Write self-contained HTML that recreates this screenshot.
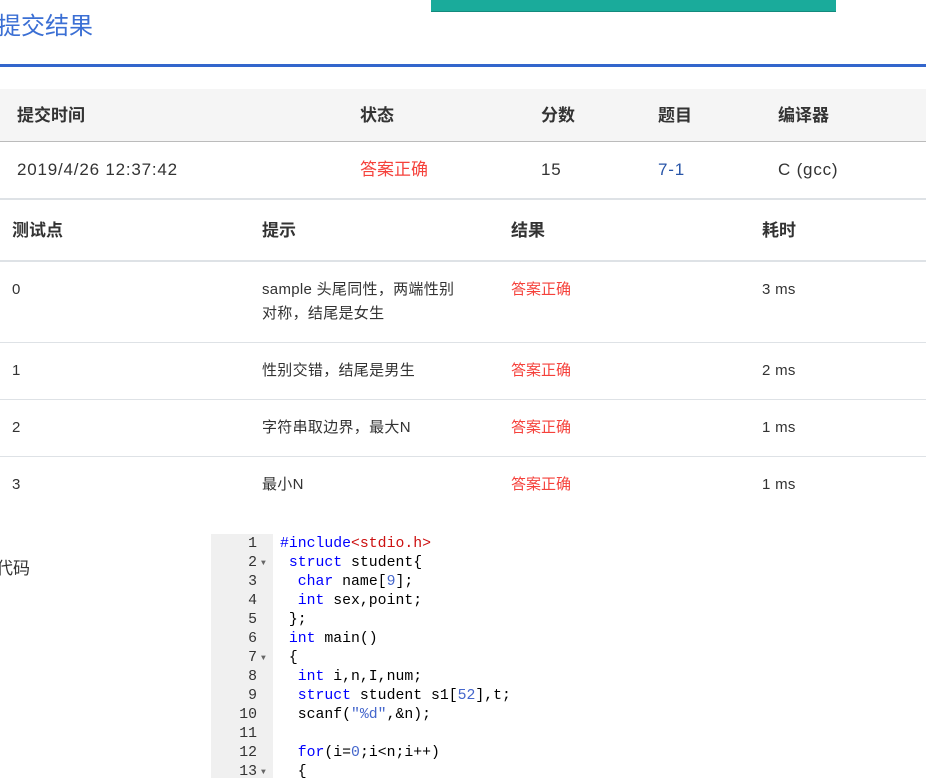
<!DOCTYPE html>
<html><head><meta charset="utf-8">
<style>
*{margin:0;padding:0;box-sizing:border-box}
body{width:926px;height:778px;overflow:hidden;background:#fff;font-family:"Liberation Sans","Noto Sans CJK SC",sans-serif;color:#333;position:relative}
.a{position:absolute;white-space:nowrap;line-height:20px}
.b{font-weight:bold;font-size:17px;color:#333}
.t{font-size:17px;color:#333;letter-spacing:0.8px}
.s{font-size:15px;color:#333;letter-spacing:0.3px}
.r{color:#f5413b;letter-spacing:0}
.code{position:absolute;left:211px;top:534px;width:715px;height:244px;font-family:"Liberation Mono","DejaVu Sans Mono",monospace;font-size:14.8px;line-height:19px}
.gut{position:absolute;left:0;top:0;width:62px;height:244px;background:#f0f0f0}
.ln{position:absolute;left:0;width:46px;text-align:right;color:#333}
.ar{position:absolute;left:50px;font-size:8px;color:#666}
.cl{position:absolute;left:69px;color:#000;white-space:pre}
.k{color:#0000ff}.n{color:#4466cc}.inc{color:#cc1111}
</style></head><body>
<div class="a" style="left:431px;top:0;width:405px;height:12px;background:#1aab9b;border-bottom:1px solid #138a7d"></div>
<div class="a" style="left:-3px;top:12px;font-size:24px;line-height:30px;color:#3b6fd4">提交结果</div>
<div class="a" style="left:0;top:64px;width:926px;height:3px;background:#3366cc"></div>

<div class="a" style="left:0;top:89px;width:926px;height:53px;background:#f5f5f5;border-bottom:1px solid #bbb"></div>
<div class="a b" style="left:17px;top:106px">提交时间</div>
<div class="a b" style="left:360px;top:106px">状态</div>
<div class="a b" style="left:541px;top:106px">分数</div>
<div class="a b" style="left:658px;top:106px">题目</div>
<div class="a b" style="left:778px;top:106px">编译器</div>
<div class="a t" style="left:17px;top:160px">2019/4/26 12:37:42</div>
<div class="a t r" style="left:360px;top:160px">答案正确</div>
<div class="a t" style="left:541px;top:160px">15</div>
<div class="a t" style="left:658px;top:160px;color:#2855a8">7-1</div>
<div class="a t" style="left:778px;top:160px">C (gcc)</div>

<div class="a" style="left:0;top:198px;width:926px;height:2px;background:#dee2e6"></div>
<div class="a b" style="left:12px;top:221px">测试点</div>
<div class="a b" style="left:262px;top:221px">提示</div>
<div class="a b" style="left:511px;top:221px">结果</div>
<div class="a b" style="left:762px;top:221px">耗时</div>
<div class="a" style="left:0;top:260px;width:926px;height:2px;background:#dee2e6"></div>

<div class="a s" style="left:12px;top:280px">0</div>
<div class="a s" style="left:262px;top:280px;line-height:24px;top:278px">sample 头尾同性，两端性别<br>对称，结尾是女生</div>
<div class="a s r" style="left:511px;top:280px">答案正确</div>
<div class="a s" style="left:762px;top:280px">3 ms</div>
<div class="a" style="left:0;top:342px;width:926px;height:1px;background:#dee2e6"></div>

<div class="a s" style="left:12px;top:361px">1</div>
<div class="a s" style="left:262px;top:361px">性别交错，结尾是男生</div>
<div class="a s r" style="left:511px;top:361px">答案正确</div>
<div class="a s" style="left:762px;top:361px">2 ms</div>
<div class="a" style="left:0;top:399px;width:926px;height:1px;background:#dee2e6"></div>

<div class="a s" style="left:12px;top:418px">2</div>
<div class="a s" style="left:262px;top:418px">字符串取边界，最大N</div>
<div class="a s r" style="left:511px;top:418px">答案正确</div>
<div class="a s" style="left:762px;top:418px">1 ms</div>
<div class="a" style="left:0;top:456px;width:926px;height:1px;background:#dee2e6"></div>

<div class="a s" style="left:12px;top:475px">3</div>
<div class="a s" style="left:262px;top:475px">最小N</div>
<div class="a s r" style="left:511px;top:475px">答案正确</div>
<div class="a s" style="left:762px;top:475px">1 ms</div>

<div class="a" style="left:-4px;top:559px;font-size:17px;color:#333">代码</div>

<div class="code">
<div class="gut"></div>
<div class="ln" style="top:1px">1</div>
<div class="ln" style="top:20px">2</div><div class="ar" style="top:20px">▼</div>
<div class="ln" style="top:39px">3</div>
<div class="ln" style="top:58px">4</div>
<div class="ln" style="top:77px">5</div>
<div class="ln" style="top:96px">6</div>
<div class="ln" style="top:115px">7</div><div class="ar" style="top:115px">▼</div>
<div class="ln" style="top:134px">8</div>
<div class="ln" style="top:153px">9</div>
<div class="ln" style="top:172px">10</div>
<div class="ln" style="top:191px">11</div>
<div class="ln" style="top:210px">12</div>
<div class="ln" style="top:229px">13</div><div class="ar" style="top:229px">▼</div>
<div class="cl" style="top:1px"><span class="k">#include</span><span class="inc">&lt;stdio.h&gt;</span></div>
<div class="cl" style="top:20px"> <span class="k">struct</span> student{</div>
<div class="cl" style="top:39px">  <span class="k">char</span> name[<span class="n">9</span>];</div>
<div class="cl" style="top:58px">  <span class="k">int</span> sex,point;</div>
<div class="cl" style="top:77px"> };</div>
<div class="cl" style="top:96px"> <span class="k">int</span> main()</div>
<div class="cl" style="top:115px"> {</div>
<div class="cl" style="top:134px">  <span class="k">int</span> i,n,I,num;</div>
<div class="cl" style="top:153px">  <span class="k">struct</span> student s1[<span class="n">52</span>],t;</div>
<div class="cl" style="top:172px">  scanf(<span class="n">"%d"</span>,&amp;n);</div>
<div class="cl" style="top:210px">  <span class="k">for</span>(i=<span class="n">0</span>;i&lt;n;i++)</div>
<div class="cl" style="top:229px">  {</div>
</div>
</body></html>
